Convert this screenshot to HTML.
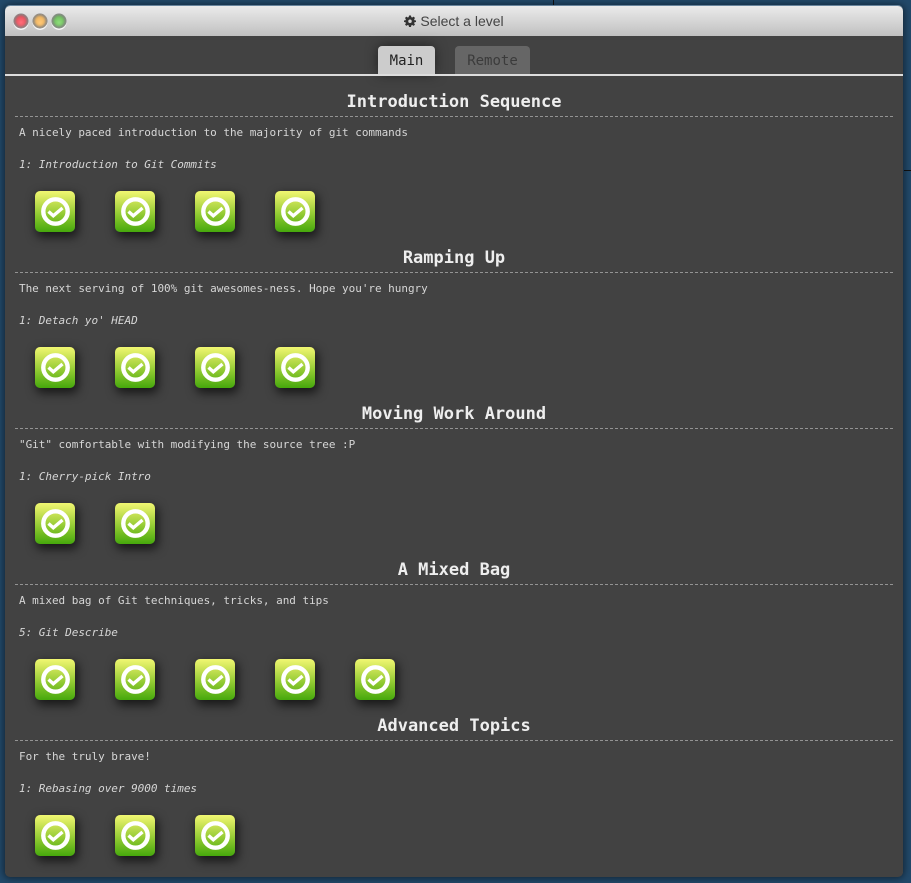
<!DOCTYPE html>
<html><head><meta charset="utf-8"><title>Select a level</title>
<style>
html,body{margin:0;padding:0;width:911px;height:883px;overflow:hidden;background:#22496a;}
body{position:relative;font-family:"DejaVu Sans Mono","Liberation Mono",monospace;}
.win{position:absolute;left:5px;top:6px;width:898px;height:871px;background:#424242;border-radius:5px;box-shadow:0 -1px 0 rgba(170,200,225,.55),0 0 8px 1px rgba(0,0,0,.55);overflow:hidden;}
.bar{position:absolute;left:0;top:0;width:100%;height:30px;background:linear-gradient(#ebebeb,#c0c0c0);}
.ttl{position:absolute;left:0;right:0;top:7px;text-align:center;font:14px/16px "Liberation Sans",sans-serif;color:#444;}
.ttl svg{vertical-align:-1px;margin-right:4px;}
.dot{position:absolute;top:8px;width:14px;height:14px;border-radius:50%;box-shadow:0 0 0 .5px #858585,0 1.5px 0 .5px #f7f7f7,inset 0 0 2px 1.500px #858585;}
.line{position:absolute;left:0;top:68px;width:100%;height:2px;background:#ddd;}
.tab{position:absolute;top:40px;height:28px;border-radius:4px 4px 0 0;text-align:center;font-size:14px;line-height:31px;}
.a{left:373px;width:57px;background:#ccc;color:#222;box-shadow:0 0 12px rgba(0,0,0,.5);}
.b{left:450px;width:75px;background:#666;color:#3b3b3b;}
h2,p,hr{position:absolute;margin:0;}
h2{left:0;width:898px;text-align:center;font-size:17px;line-height:20px;font-weight:bold;color:#eee;}
hr{left:10px;width:878px;border:0;border-top:1px dashed #939393;height:0;}
p{left:14px;font-size:11px;line-height:14px;color:#d6d6d6;white-space:pre;letter-spacing:-.03px;}
p.i{font-style:italic;}
.ic{position:absolute;width:40px;height:41px;border-radius:5px;background:linear-gradient(#f1f772,#c4e052 28%,#8cc82f 60%,#46a80c);box-shadow:2px 4px 10px 1px rgba(0,0,0,.65);}
.ic svg{position:absolute;left:0;top:0;}
.ln{position:absolute;background:#111;}
</style></head><body>
<div class="ln" style="left:553px;top:0;width:1px;height:5px"></div>
<div class="ln" style="left:904px;top:170px;width:7px;height:1px"></div>
<div class="win">
<div class="bar">
<div class="dot" style="left:9px;background:radial-gradient(circle at 50% 60%,#ff6f7c,#d8353f)"></div>
<div class="dot" style="left:28px;background:radial-gradient(circle at 50% 60%,#ffc877,#e0a24a)"></div>
<div class="dot" style="left:47px;background:radial-gradient(circle at 50% 60%,#8fdc7c,#55a944)"></div>
<div class="ttl"><svg width="12" height="12" viewBox="0 0 24 24"><path fill="#333" fill-rule="evenodd" d="M10 1h4l.6 3.200 2 .8L19.300 3.200 22 6l-1.800 2.600.8 2L24 11v3l-3 .6-.8 2L22 19l-2.700 2.800-2.700-1.800-2 .8L14 24h-4l-.6-3.200-2-.8L4.700 21.800 2 19l1.800-2.400-.8-2L0 14v-3l3-.4.8-2L2 6l2.700-2.800L7.400 5l2-.8zM12 9a3.500 3.500 0 1 0 0 7 3.500 3.500 0 0 0 0-7z"/></svg>Select a level</div>
</div>
<div class="tab a">Main</div>
<div class="tab b">Remote</div>
<div class="line"></div>

<h2 style="top:86px">Introduction Sequence</h2><hr style="top:110px">
<p style="top:120px">A nicely paced introduction to the majority of git commands</p>
<p class="i" style="top:152px">1: Introduction to Git Commits</p>
<div class="ic" style="left:30px;top:185px"><svg width="40" height="41"><use href="#k"/></svg></div>
<div class="ic" style="left:110px;top:185px"><svg width="40" height="41"><use href="#k"/></svg></div>
<div class="ic" style="left:190px;top:185px"><svg width="40" height="41"><use href="#k"/></svg></div>
<div class="ic" style="left:270px;top:185px"><svg width="40" height="41"><use href="#k"/></svg></div>

<h2 style="top:242px">Ramping Up</h2><hr style="top:266px">
<p style="top:276px">The next serving of 100% git awesomes-ness. Hope you're hungry</p>
<p class="i" style="top:308px">1: Detach yo' HEAD</p>
<div class="ic" style="left:30px;top:341px"><svg width="40" height="41"><use href="#k"/></svg></div>
<div class="ic" style="left:110px;top:341px"><svg width="40" height="41"><use href="#k"/></svg></div>
<div class="ic" style="left:190px;top:341px"><svg width="40" height="41"><use href="#k"/></svg></div>
<div class="ic" style="left:270px;top:341px"><svg width="40" height="41"><use href="#k"/></svg></div>

<h2 style="top:398px">Moving Work Around</h2><hr style="top:422px">
<p style="top:432px">"Git" comfortable with modifying the source tree :P</p>
<p class="i" style="top:464px">1: Cherry-pick Intro</p>
<div class="ic" style="left:30px;top:497px"><svg width="40" height="41"><use href="#k"/></svg></div>
<div class="ic" style="left:110px;top:497px"><svg width="40" height="41"><use href="#k"/></svg></div>

<h2 style="top:554px">A Mixed Bag</h2><hr style="top:578px">
<p style="top:588px">A mixed bag of Git techniques, tricks, and tips</p>
<p class="i" style="top:620px">5: Git Describe</p>
<div class="ic" style="left:30px;top:653px"><svg width="40" height="41"><use href="#k"/></svg></div>
<div class="ic" style="left:110px;top:653px"><svg width="40" height="41"><use href="#k"/></svg></div>
<div class="ic" style="left:190px;top:653px"><svg width="40" height="41"><use href="#k"/></svg></div>
<div class="ic" style="left:270px;top:653px"><svg width="40" height="41"><use href="#k"/></svg></div>
<div class="ic" style="left:350px;top:653px"><svg width="40" height="41"><use href="#k"/></svg></div>

<h2 style="top:710px">Advanced Topics</h2><hr style="top:734px">
<p style="top:744px">For the truly brave!</p>
<p class="i" style="top:776px">1: Rebasing over 9000 times</p>
<div class="ic" style="left:30px;top:809px"><svg width="40" height="41"><use href="#k"/></svg></div>
<div class="ic" style="left:110px;top:809px"><svg width="40" height="41"><use href="#k"/></svg></div>
<div class="ic" style="left:190px;top:809px"><svg width="40" height="41"><use href="#k"/></svg></div>
</div>
<svg width="0" height="0" style="position:absolute"><defs><g id="k"><circle cx="20.500" cy="20.500" r="12.200" fill="none" stroke="#fff" stroke-width="4.400"/><path d="M13.500 20.500l4.800 4.300L27.500 17" fill="none" stroke="#fff" stroke-width="3.400"/></g></defs></svg>
</body></html>
